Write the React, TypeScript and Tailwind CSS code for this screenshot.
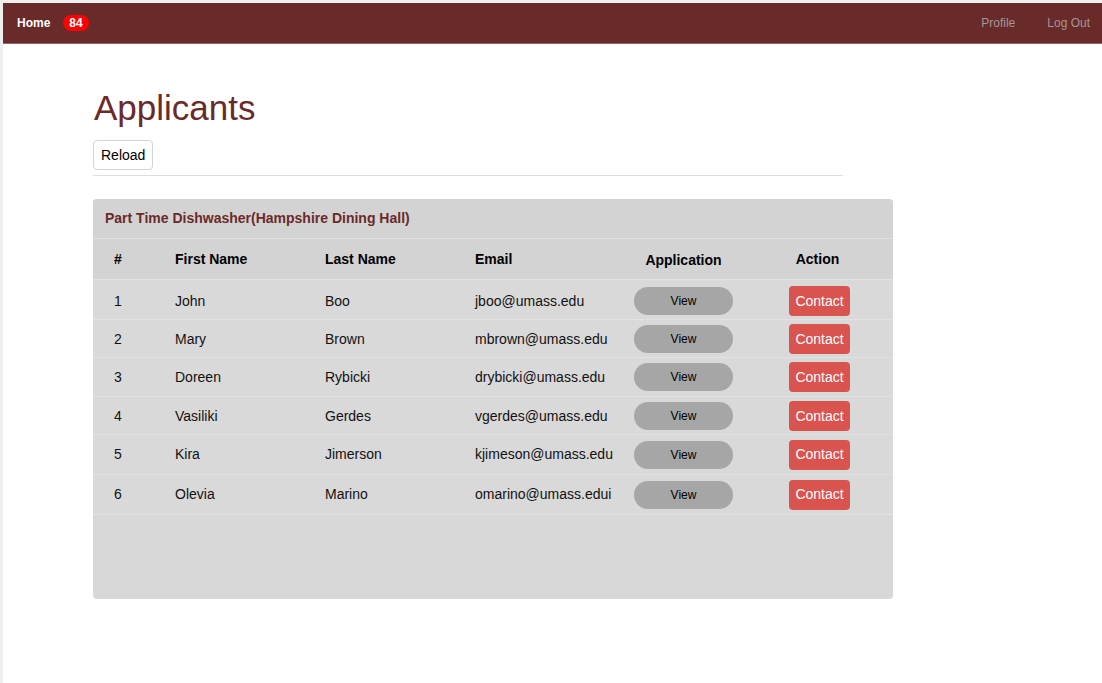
import React from "react";

const rows = [
  { n: "1", f: "John", l: "Boo", e: "jboo@umass.edu", h: "h-[40px] pt-[3px]" },
  { n: "2", f: "Mary", l: "Brown", e: "mbrown@umass.edu", h: "h-[38px] pt-[1px]" },
  { n: "3", f: "Doreen", l: "Rybicki", e: "drybicki@umass.edu", h: "h-[39px]" },
  { n: "4", f: "Vasiliki", l: "Gerdes", e: "vgerdes@umass.edu", h: "h-[38px] pt-[1px]" },
  { n: "5", f: "Kira", l: "Jimerson", e: "kjimeson@umass.edu", h: "h-[40px]" },
  { n: "6", f: "Olevia", l: "Marino", e: "omarino@umass.edui", h: "h-[40px]" },
];

export default function App() {
  return (
    <div
      className="min-h-[683px] bg-[#efefef] pl-[3px] pt-[3px]"
      style={{ fontFamily: '"Liberation Sans", Arial, sans-serif' }}
    >
      <div className="min-h-[680px] bg-white">
        <nav className="flex h-[41px] items-stretch border-b border-[#9c6463] bg-[#692a2a] text-[12px]">
          <div className="flex w-[92px] items-center pl-[14px]">
            <span className="font-bold text-white">Home</span>
            <span className="ml-[13px] rounded-full bg-[#ff0000] px-[6px] py-[1px] text-[12px] font-bold leading-[14px] text-white">
              84
            </span>
          </div>
          <div className="ml-auto flex items-center gap-[32px] pr-[12px] text-[#a39898]">
            <span>Profile</span>
            <span>Log Out</span>
          </div>
        </nav>

        <div className="ml-[90px] w-[800px]">
          <h1 className="ml-[1px] mt-[44px] text-[35px] leading-[40px] text-[#6b2a2a]">Applicants</h1>
          <button className="mt-[12px] h-[30px] rounded-[4px] border border-[#d4d4d4] bg-white px-[7px] text-[14px] text-black">
            Reload
          </button>
          <div className="mt-[5px] h-px w-[750px] bg-[#dedede]" />

          <div className="mt-[23px] h-[400px] overflow-hidden rounded-[4px] bg-[#d8d8d8]">
            <div className="flex h-[40px] items-center border-b border-[#dfdfdf] bg-[#d3d3d3] pl-[12px] text-[14px] font-bold text-[#6b2a2a]">
              Part Time Dishwasher(Hampshire Dining Hall)
            </div>
            <div className="flex h-[40px] items-center bg-[#d3d3d3] text-[14px] font-bold text-black">
              <div className="w-[82px] pl-[21px]">#</div>
              <div className="w-[150px]">First Name</div>
              <div className="w-[150px]">Last Name</div>
              <div className="w-[150px]">Email</div>
              <div className="w-[117px] pt-[2px] text-center">Application</div>
              <div className="w-[151px] text-center">Action</div>
            </div>
            {rows.map((r) => (
              <div
                key={r.n}
                className={`flex ${r.h} items-center border-t border-[#e2e2e2] bg-[#d9d9d9] text-[14px] text-[#111]`}
              >
                <div className="w-[82px] pl-[21px]">{r.n}</div>
                <div className="w-[150px]">{r.f}</div>
                <div className="w-[150px]">{r.l}</div>
                <div className="w-[150px]">{r.e}</div>
                <div className="flex w-[117px] justify-center">
                  <span className="flex h-[28px] w-[99px] items-center justify-center rounded-full bg-[#a6a6a6] text-[12px] text-black">
                    View
                  </span>
                </div>
                <div className="flex w-[151px] justify-center">
                  <span className="ml-[4px] flex h-[30px] w-[61px] items-center justify-center rounded-[4px] bg-[#d9534f] text-[14px] text-white">
                    Contact
                  </span>
                </div>
              </div>
            ))}
            <div className="border-t border-[#e2e2e2]" />
          </div>
        </div>
      </div>
    </div>
  );
}
